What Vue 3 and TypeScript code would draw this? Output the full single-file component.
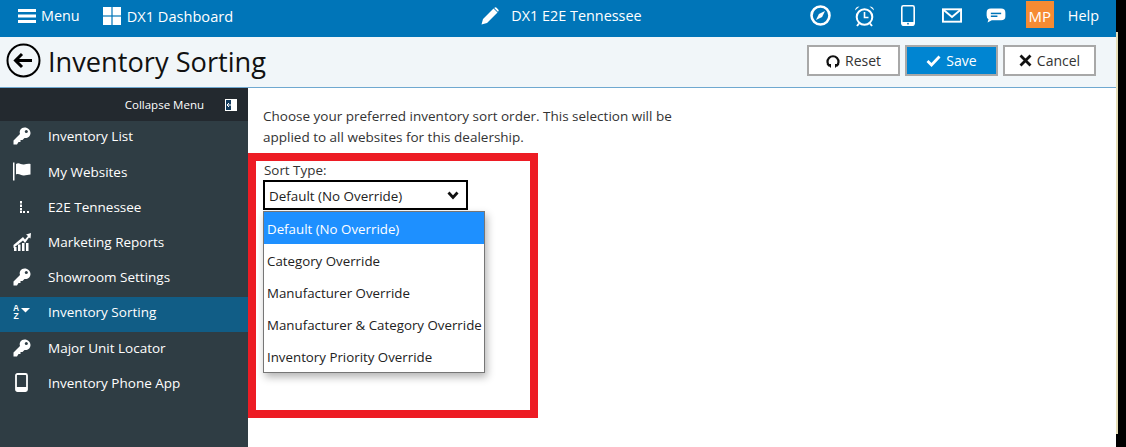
<script setup lang="ts">
const items = [
  { label: 'Inventory List', icon: 'key' },
  { label: 'My Websites', icon: 'flag' },
  { label: 'E2E Tennessee', icon: 'dots' },
  { label: 'Marketing Reports', icon: 'chart' },
  { label: 'Showroom Settings', icon: 'key' },
  { label: 'Inventory Sorting', icon: 'sort', active: true },
  { label: 'Major Unit Locator', icon: 'key' },
  { label: 'Inventory Phone App', icon: 'phone' },
]
const options = ['Default (No Override)', 'Category Override', 'Manufacturer Override', 'Manufacturer & Category Override', 'Inventory Priority Override']
</script>

<template>
  <div class="page">
    <div class="frame">
      <header class="topbar">
        <div class="nav-left">
          <span class="nav-link menu">
            <svg width="18" height="14" viewBox="0 0 18 14" fill="#fff"><rect width="18" height="3" /><rect y="5.5" width="18" height="3" /><rect y="11" width="18" height="3" /></svg>
            Menu
          </span>
          <span class="nav-link dash">
            <svg width="18" height="18" viewBox="0 0 18 18" fill="#fff"><rect width="8.4" height="8.4" /><rect x="9.6" width="8.4" height="8.4" /><rect y="9.6" width="8.4" height="8.4" /><rect x="9.6" y="9.6" width="8.4" height="8.4" /></svg>
            DX1 Dashboard
          </span>
        </div>
        <div class="nav-center">
          <svg width="18" height="18" viewBox="0 0 18 18" fill="#fff"><path d="M0.5 17.5 L2 12 L12.5 1.5 L16.5 5.5 L6 16 Z M13.5 0.8 Q14.6 -0.2 15.6 0.8 L17.2 2.4 Q18.2 3.4 17.2 4.5 L16.9 4.8 L13.2 1.1 Z" /></svg>
          <span>DX1 E2E Tennessee</span>
        </div>
        <div class="nav-right">
          <svg class="i-compass" width="21" height="21" viewBox="0 0 21 21"><circle cx="10.5" cy="10.5" r="9" fill="none" stroke="#fff" stroke-width="2.6" /><path d="M15 6 L12.1 12.1 L6 15 L8.900 8.900 Z" fill="#fff" /></svg>
          <svg class="i-clock" width="21" height="22" viewBox="0 0 21 22"><circle cx="10.5" cy="12" r="7.8" fill="none" stroke="#fff" stroke-width="2" /><path d="M10.5 7 V12.5 H14.5" fill="none" stroke="#fff" stroke-width="1.6" /><path d="M1 5.5 Q1.5 1.5 5.5 1.5 Z M20 5.5 Q19.5 1.5 15.5 1.5 Z" fill="#fff" /><path d="M5 18.5 L3 21 M16 18.5 L18 21" stroke="#fff" stroke-width="2" /></svg>
          <svg class="i-phone" width="14" height="21" viewBox="0 0 14 21"><rect x="0.8" y="0.8" width="12.400" height="19.400" rx="1.600" fill="none" stroke="#fff" stroke-width="1.600" /><rect x="1" y="17" width="12" height="3.500" fill="#fff" /><circle cx="7" cy="18.700" r="0.900" fill="#0075b8" /></svg>
          <svg class="i-mail" width="20" height="15" viewBox="0 0 21 15"><rect x="1" y="1" width="19" height="13" fill="none" stroke="#fff" stroke-width="2" /><path d="M1.5 1.5 L10.5 9 L19.5 1.5" fill="none" stroke="#fff" stroke-width="2" /></svg>
          <svg class="i-chat" width="20" height="15" viewBox="0 0 21 16"><path d="M5 0.5 H16 Q20.5 0.5 20.5 5 V9 Q20.5 13 16 13 H6 L1.5 15.5 L2.5 12 Q0.5 11 0.5 8 V5 Q0.5 0.5 5 0.5 Z" fill="#fff" /><rect x="5" y="5" width="11" height="1.6" fill="#0075b8" /><rect x="5" y="8" width="7" height="1.6" fill="#0075b8" /></svg>
          <span class="avatar">MP</span>
          <span class="help">Help</span>
        </div>
      </header>

      <div class="titlebar">
        <div class="title">
          <svg width="35" height="35" viewBox="0 0 35 35"><circle cx="17.5" cy="17.5" r="16" fill="none" stroke="#000" stroke-width="2" /><path d="M9 17.5 H26 M16 11 L9.500 17.5 L16 24" fill="none" stroke="#000" stroke-width="3" /></svg>
          <h1>Inventory Sorting</h1>
        </div>
        <div class="actions">
          <button class="btn">
            <svg width="14" height="14" viewBox="0 0 14 14"><path d="M3.500 12 A5.500 5.500 0 1 1 10.500 12" fill="none" stroke="#111" stroke-width="2.200" /><path d="M0.500 10 H5 V14 Z M13.500 10 H9 V14 Z" fill="#111" /></svg>
            Reset
          </button>
          <button class="btn primary">
            <svg width="15" height="12" viewBox="0 0 15 12"><path d="M1.500 6 L5.500 10 L13.500 1.500" fill="none" stroke="#fff" stroke-width="2.800" /></svg>
            Save
          </button>
          <button class="btn">
            <svg width="13" height="13" viewBox="0 0 13 13"><path d="M1.500 1.500 L11.500 11.500 M11.500 1.500 L1.500 11.500" fill="none" stroke="#111" stroke-width="2.800" /></svg>
            Cancel
          </button>
        </div>
      </div>

      <div class="body">
        <aside class="sidebar">
          <div class="collapse">
            <span>Collapse Menu</span>
            <svg width="12" height="12" viewBox="0 0 12 12"><rect width="12" height="12" fill="#fff" /><rect x="1" y="1" width="5" height="10" fill="#123a5c" /><path d="M2 6 H6 M4 4 L2 6 L4 8" stroke="#fff" fill="none" /></svg>
          </div>
          <ul class="menu-list">
            <li v-for="item in items" :key="item.label" :class="{ active: item.active }">
              <span class="ico">
                <svg v-if="item.icon === 'key'" width="18" height="18" viewBox="0 0 18 18" fill="#fff"><path d="M11.500 0.500 C15 0.500 17.500 3 17.500 6 C17.500 9.500 14.500 11.500 11.500 11 L9.500 13 H7.500 V15 H5.500 L4 17.500 H0.500 V13.500 L7 7 C6 3.500 8 0.500 11.500 0.500 Z" /><circle cx="13.300" cy="4.600" r="1.500" fill="#2f3d44" /></svg>
                <svg v-else-if="item.icon === 'flag'" width="18" height="19" viewBox="0 0 18 18" fill="#fff"><rect x="0" y="0" width="1.500" height="18" /><path d="M3 1.500 C6 -0.500 8 2.500 11 2 C13 1.700 15 1 17.500 1.500 V12 C15 12 13 13 11 13 C8 13.300 6 10.500 3 12 Z" /></svg>
                <svg v-else-if="item.icon === 'dots'" width="18" height="18" viewBox="0 0 18 18" fill="#fff"><rect x="7" y="3" width="2" height="2.500" /><rect x="7" y="6.500" width="2" height="2.500" /><rect x="7" y="10" width="2" height="2.500" /><rect x="7" y="13" width="2" height="2" /><rect x="10" y="13" width="2" height="2" /><rect x="14" y="13" width="2" height="2" /></svg>
                <svg v-else-if="item.icon === 'chart'" width="18" height="18" viewBox="0 0 18 18" fill="#fff"><path d="M0.500 12 L10 4 L12 6.500 L15 3 L13 1.500 L18 0 L17.500 5.500 L16 4.500 L12 10 L10 7.500 L0.500 15 Z" /><rect x="1" y="14" width="2.500" height="4" /><rect x="5" y="11.500" width="2.500" height="6.500" /><rect x="9" y="10" width="2.500" height="8" /><rect x="13" y="10" width="2.500" height="8" /></svg>
                <svg v-else-if="item.icon === 'sort'" width="18" height="16" viewBox="0 0 18 16" fill="#fff"><text x="0" y="7" font-size="8.500" font-weight="700" font-family="Liberation Sans">A</text><text x="0.500" y="15" font-size="8.500" font-weight="700" font-family="Liberation Sans">Z</text><path d="M8 4 H17 L12.500 8.500 Z" /></svg>
                <svg v-else class="ico-phone" width="13" height="19" viewBox="0 0 13 19"><rect x="1" y="1" width="11" height="17" rx="1.500" fill="none" stroke="#fff" stroke-width="1.800" /><rect x="1" y="14" width="11" height="4" fill="#fff" /></svg>
              </span>
              <span class="lbl">{{ item.label }}</span>
            </li>
          </ul>
        </aside>

        <main class="content">
          <p class="intro">Choose your preferred inventory sort order. This selection will be applied to all websites for this dealership.</p>
          <div class="highlight">
            <label class="field-label">Sort Type:</label>
            <div class="select">
              <span>Default (No Override)</span>
              <svg width="12" height="9" viewBox="0 0 12 9"><path d="M1.500 1.500 L6 6.500 L10.500 1.500" fill="none" stroke="#111" stroke-width="2.800" /></svg>
            </div>
            <ul class="dropdown">
              <li v-for="(o, i) in options" :key="o" :class="{ sel: i === 0 }">{{ o }}</li>
            </ul>
          </div>
        </main>
      </div>
    </div>
    <div class="strip"><div class="strip-line"></div></div>
  </div>
</template>

<style scoped>
.page {
  width: 1126px;
  height: 447px;
  overflow: hidden;
  background: #fff;
  font-family: "Open Sans", "Noto Sans", sans-serif;
  color: #222;
  display: flex;
}
.frame {
  width: 1116px;
  flex: none;
  height: 447px;
  display: flex;
  flex-direction: column;
}
.strip {
  flex: 1;
  background: #000;
  box-sizing: border-box;
  padding: 32px 0 13px;
}
.strip-line {
  width: 2px;
  height: 100%;
  background: #e6deb8;
}
.topbar {
  height: 37px;
  flex: none;
  box-sizing: border-box;
  padding-bottom: 6px;
  background: #0075b8;
  color: #fff;
  display: grid;
  grid-template-columns: 1fr auto 1fr;
  align-items: center;
  font-size: 14.4px;
}
.nav-left { display: flex; align-items: center; padding-left: 18px; gap: 23px; }
.nav-link { display: flex; align-items: center; gap: 5px; }
.dash { gap: 6px; font-size: 14.6px; }
.nav-center { display: flex; align-items: center; gap: 12px; padding-left: 7px; }
.nav-right { display: flex; align-items: center; justify-content: flex-end; padding-right: 17px; }
.i-compass { margin-right: 23px; }
.i-clock { margin-right: 26px; }
.i-phone { margin-right: 27px; }
.i-mail { margin-right: 24px; }
.i-chat { margin-right: 20px; }
.avatar {
  width: 28px;
  height: 27px;
  margin-top: -3px;
  box-sizing: border-box;
  padding-top: 3px;
  background: #f68b33;
  display: flex;
  align-items: center;
  justify-content: center;
  margin-right: 14px;
  font-size: 15px;
}
.titlebar {
  height: 51px;
  flex: none;
  box-sizing: border-box;
  background: #f1f6f9;
  border-bottom: 1px solid #6fa8d0;
  display: flex;
  justify-content: space-between;
  align-items: center;
  padding: 0 20px 3px 6px;
}
.title { display: flex; align-items: center; gap: 7px; }
h1 {
  margin: 2px 0 0;
  font-size: 27.2px;
  font-weight: 400;
  color: #111;
}
.actions { display: flex; gap: 5px; }
.btn {
  width: 93px;
  height: 31px;
  box-sizing: border-box;
  border: 2px solid #a8a8a8;
  background: #fff;
  font: inherit;
  font-size: 14px;
  color: #333;
  display: flex;
  align-items: center;
  justify-content: center;
  gap: 5px;
  padding: 0;
}
.btn.primary { background: #0085d2; color: #fff; }
.body { flex: 1; display: flex; min-height: 0; }
.sidebar {
  width: 248px;
  flex: none;
  background: #2f3d44;
  color: #fff;
}
.collapse {
  height: 33px;
  background: #23292f;
  display: flex;
  align-items: center;
  justify-content: flex-end;
  gap: 21px;
  padding-right: 11px;
  font-size: 11.5px;
}
.menu-list { list-style: none; margin: 0; padding: 0; }
.menu-list li {
  height: 35.2px;
  box-sizing: border-box;
  padding-bottom: 4.4px;
  display: flex;
  align-items: center;
  font-size: 13.5px;
}
.menu-list li.active { background: #115d86; }
.ico { width: 48px; padding-left: 12.5px; box-sizing: border-box; display: flex; align-items: center; }
.ico-phone { margin-left: 2px; }
.content { flex: 1; min-width: 0; padding: 18px 0 0 15px; }
.intro {
  margin: 0 0 5px;
  width: 430px;
  font-size: 13.5px;
  line-height: 21px;
  color: #333;
}
.highlight {
  position: relative;
  width: 290px;
  height: 265px;
  margin-left: -15px;
  box-sizing: border-box;
  border: 8px solid #ed1c24;
  padding: 0 0 0 7px;
}
.field-label { display: block; font-size: 13.4px; line-height: 19px; color: #333; padding-left: 1px; }
.select {
  width: 205px;
  height: 30px;
  box-sizing: border-box;
  border: 2px solid #000;
  display: flex;
  align-items: center;
  justify-content: space-between;
  padding: 1px 7px 0 4px;
  font-size: 13.4px;
  color: #222;
}
.dropdown {
  position: absolute;
  left: 7px;
  top: 50px;
  width: 222px;
  box-sizing: border-box;
  margin: 0;
  padding: 0;
  list-style: none;
  background: #fff;
  border: 1px solid #767676;
  box-shadow: 2px 4px 8px rgba(0, 0, 0, 0.3);
  font-size: 13.3px;
}
.dropdown li { height: 32px; line-height: 34px; padding-left: 3px; white-space: nowrap; color: #222; }
.dropdown li.sel { background: #1e90ff; color: #fff; }
</style>
